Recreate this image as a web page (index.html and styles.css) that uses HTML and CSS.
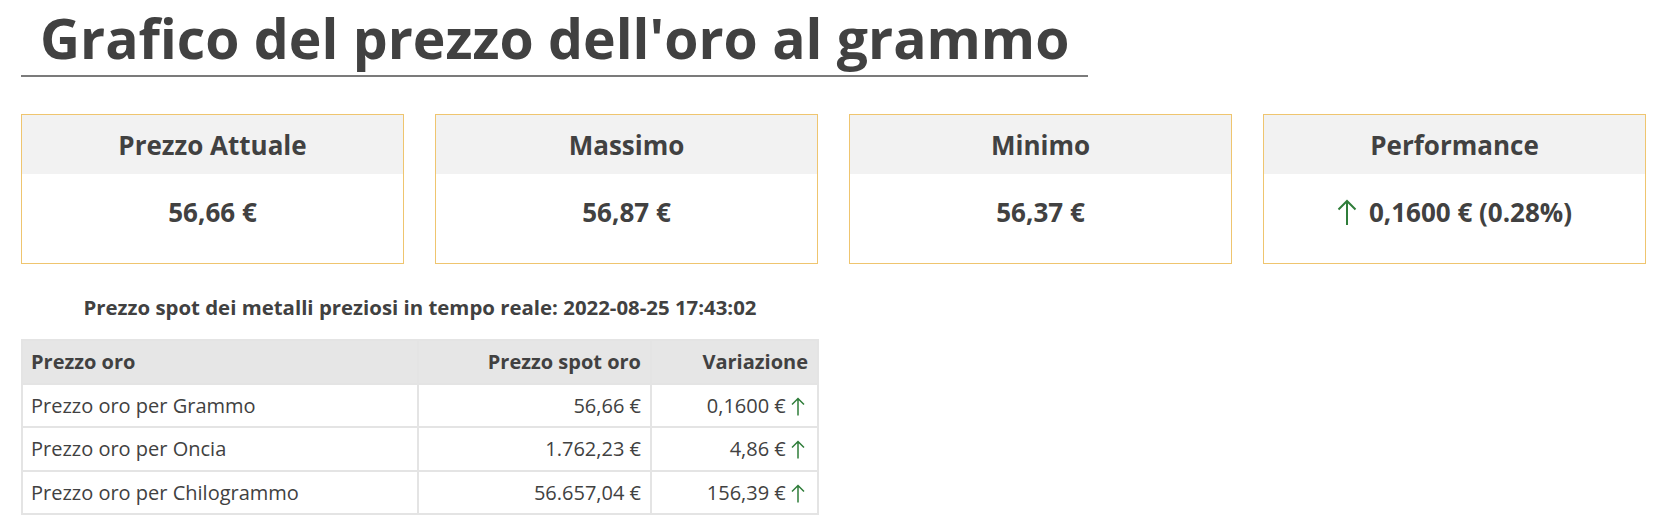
FILE: index.html
```html
<!DOCTYPE html>
<html lang="it">
<head>
<meta charset="utf-8">
<title>Grafico del prezzo dell'oro al grammo</title>
<link rel="stylesheet" href="styles.css">
</head>
<body>
<div class="page">
  <h1 class="title">Grafico del prezzo dell'oro al grammo</h1>

  <div class="cards">
    <div class="card">
      <div class="card-head">Prezzo Attuale</div>
      <div class="card-body">56,66 €</div>
    </div>
    <div class="card">
      <div class="card-head">Massimo</div>
      <div class="card-body">56,87 €</div>
    </div>
    <div class="card">
      <div class="card-head">Minimo</div>
      <div class="card-body">56,37 €</div>
    </div>
    <div class="card">
      <div class="card-head">Performance</div>
      <div class="card-body">
        <svg class="arrow-big" width="20" height="27" viewBox="0 0 20 27" aria-hidden="true"><path d="M10 26V2M1.5 10.5L10 2l8.5 8.5" fill="none" stroke="currentColor" stroke-width="2"/></svg>
        <span>0,1600 € (0.28%)</span>
      </div>
    </div>
  </div>

  <div class="spot-block">
    <p class="spot-time">Prezzo spot dei metalli preziosi in tempo reale: 2022-08-25 17:43:02</p>
    <table class="spot-table">
      <thead>
        <tr><th class="c1">Prezzo oro</th><th class="c2">Prezzo spot oro</th><th class="c3">Variazione</th></tr>
      </thead>
      <tbody>
        <tr><td>Prezzo oro per Grammo</td><td class="num">56,66 €</td><td class="num">0,1600 € <svg class="arrow-sm" width="14" height="19" viewBox="0 0 14 19" aria-hidden="true"><path d="M7 18.5V1.5M1 7.5l6-6 6 6" fill="none" stroke="currentColor" stroke-width="1.5"/></svg></td></tr>
        <tr><td>Prezzo oro per Oncia</td><td class="num">1.762,23 €</td><td class="num">4,86 € <svg class="arrow-sm" width="14" height="19" viewBox="0 0 14 19" aria-hidden="true"><path d="M7 18.5V1.5M1 7.5l6-6 6 6" fill="none" stroke="currentColor" stroke-width="1.5"/></svg></td></tr>
        <tr><td>Prezzo oro per Chilogrammo</td><td class="num">56.657,04 €</td><td class="num">156,39 € <svg class="arrow-sm" width="14" height="19" viewBox="0 0 14 19" aria-hidden="true"><path d="M7 18.5V1.5M1 7.5l6-6 6 6" fill="none" stroke="currentColor" stroke-width="1.5"/></svg></td></tr>
      </tbody>
    </table>
  </div>
</div>
</body>
</html>
```

FILE: styles.css
```css
html, body {
  margin: 0;
  padding: 0;
  background: #ffffff;
}

body {
  font-family: "Open Sans", "Liberation Sans", sans-serif;
  color: #414141;
}

.page {
  padding: 0 22px 0 21px;
}

.title {
  display: inline-block;
  margin: 0;
  padding: 0 19px;
  font-size: 55.3px;
  line-height: 75px;
  font-weight: 700;
  color: #414141;
  border-bottom: 2px solid #7b7b7b;
}

.cards {
  display: grid;
  grid-template-columns: repeat(4, 1fr);
  gap: 31px;
  margin-top: 37px;
}

.card {
  border: 1px solid #efc56f;
  background: #fff;
}

.card-head {
  height: 59px;
  background: #f2f2f2;
  display: flex;
  align-items: center;
  justify-content: center;
  font-size: 26px;
  font-weight: 700;
}

.card-body {
  height: 36px;
  padding: 20px 0 33px;
  display: flex;
  align-items: center;
  justify-content: center;
  gap: 12px;
  font-size: 26px;
  font-weight: 700;
}

.arrow-big {
  color: #2f7d3a;
  display: block;
}

.spot-block {
  width: 798px;
}

.spot-time {
  margin: 0;
  padding-top: 26px;
  text-align: center;
  font-size: 20.4px;
  font-weight: 700;
  line-height: 34px;
}

.spot-table {
  margin-top: 15px;
  width: 798px;
  border-collapse: collapse;
  font-size: 20px;
  table-layout: fixed;
}

.spot-table th,
.spot-table td {
  border: 2px solid #e4e4e4;
  height: 41.5px;
  padding: 0 9px 0 8px;
  text-align: left;
  white-space: nowrap;
}

.spot-table th {
  background: #e6e6e6;
  font-weight: 700;
}

.spot-table th.c1 { width: 377px; }
.spot-table th.c2 { width: 214px; text-align: right; }
.spot-table th.c3 { text-align: right; }

.spot-table td.num {
  text-align: right;
}

.arrow-sm {
  color: #2f7d3a;
  vertical-align: -3px;
  margin-right: 3px;
}
```
